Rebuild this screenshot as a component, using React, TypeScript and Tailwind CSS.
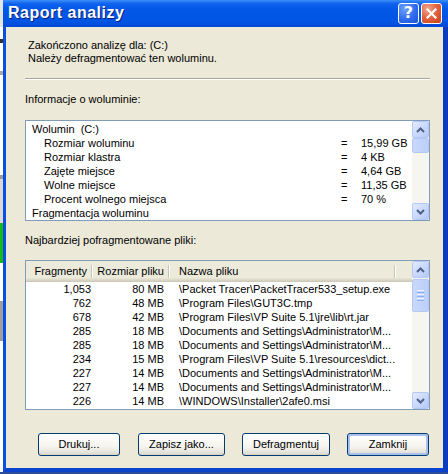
import React from 'react';

const volumeRows = [
  { label: 'Wolumin  (C:)', indent: false, value: '' },
  { label: 'Rozmiar woluminu', indent: true, value: '15,99 GB' },
  { label: 'Rozmiar klastra', indent: true, value: '4 KB' },
  { label: 'Zajęte miejsce', indent: true, value: '4,64 GB' },
  { label: 'Wolne miejsce', indent: true, value: '11,35 GB' },
  { label: 'Procent wolnego miejsca', indent: true, value: '70 %' },
  { label: 'Fragmentacja woluminu', indent: false, value: '' },
];

const files = [
  ['1,053', '80 MB', '\\Packet Tracer\\PacketTracer533_setup.exe'],
  ['762', '48 MB', '\\Program Files\\GUT3C.tmp'],
  ['678', '42 MB', '\\Program Files\\VP Suite 5.1\\jre\\lib\\rt.jar'],
  ['285', '18 MB', '\\Documents and Settings\\Administrator\\M...'],
  ['285', '18 MB', '\\Documents and Settings\\Administrator\\M...'],
  ['234', '15 MB', '\\Program Files\\VP Suite 5.1\\resources\\dict...'],
  ['227', '14 MB', '\\Documents and Settings\\Administrator\\M...'],
  ['227', '14 MB', '\\Documents and Settings\\Administrator\\M...'],
  ['226', '14 MB', '\\WINDOWS\\Installer\\2afe0.msi'],
];

function Arrow({ up }: { up: boolean }) {
  return (
    <svg width="9" height="6" viewBox="0 0 9 6">
      <path
        d={up ? 'M1 5 L4.5 1.5 L8 5' : 'M1 1 L4.5 4.5 L8 1'}
        fill="none"
        stroke="#4D6185"
        strokeWidth="2"
      />
    </svg>
  );
}

function ScrollButton({ up }: { up: boolean }) {
  return (
    <div className="h-[17px] w-[17px] flex items-center justify-center rounded-[2px] border border-[#B5C8F3] bg-[linear-gradient(135deg,#E2EBFE_0%,#C6D6FC_60%,#B4C8F6_100%)]">
      <Arrow up={up} />
    </div>
  );
}

function Scrollbar({ thumbTop, thumbHeight, grip }: { thumbTop: number; thumbHeight: number; grip?: boolean }) {
  return (
    <div className="w-[17px] flex flex-col bg-[#F6F5EF]">
      <ScrollButton up />
      <div className="flex-1 flex flex-col">
        <div
          className="rounded-[2px] border border-[#B5C8F3] bg-[linear-gradient(90deg,#C9D8FC_0%,#BCCFFA_100%)] flex flex-col items-center justify-center gap-[1px]"
          style={{ marginTop: thumbTop, height: thumbHeight }}
        >
          {grip && (
            <>
              <div className="w-[7px] h-[1px] bg-[#EEF4FE]" />
              <div className="w-[7px] h-[1px] bg-[#8CB0F8]" />
              <div className="w-[7px] h-[1px] bg-[#EEF4FE]" />
              <div className="w-[7px] h-[1px] bg-[#8CB0F8]" />
              <div className="w-[7px] h-[1px] bg-[#EEF4FE]" />
              <div className="w-[7px] h-[1px] bg-[#8CB0F8]" />
            </>
          )}
        </div>
      </div>
      <ScrollButton up={false} />
    </div>
  );
}

function HeaderCell({ children, className }: { children?: React.ReactNode; className: string }) {
  return (
    <div className={`relative h-full flex items-center ${className}`}>
      {children}
      <div className="absolute right-0 top-[4px] bottom-[4px] w-[2px] flex">
        <div className="w-[1px] bg-[#C7C5B2]" />
        <div className="w-[1px] bg-white" />
      </div>
    </div>
  );
}

function XpButton({ label, width, primary }: { label: string; width: string; primary?: boolean }) {
  return (
    <button
      className={`${width} h-[23px] rounded-[3px] border border-[#003C74] bg-[linear-gradient(180deg,#FFFFFF_0%,#F5F4EF_60%,#E3E1D7_90%,#D6D0C5_100%)] ${
        primary ? 'shadow-[inset_0_0_0_2px_#A8C1EE]' : ''
      }`}
    >
      {label}
    </button>
  );
}

export default function App() {
  return (
    <div className="w-[448px] h-[474px] flex flex-col bg-[#2A4C9A] overflow-hidden font-['Liberation_Sans',Arial,sans-serif] text-[11px] leading-[13px] text-black">
      <div className="flex h-[472px]">
        {/* desktop behind the dialog */}
        <div className="w-[3px] flex flex-col">
          <div className="h-[27px] bg-[#E4E4E4]" />
          <div className="h-[12px] bg-white" />
          <div className="h-[4px] bg-[#333]" />
          <div className="h-[28px] bg-white" />
          <div className="h-[4px] bg-[#A8A8A8]" />
          <div className="h-[100px] bg-white" />
          <div className="h-[4px] bg-[#9A9A9A]" />
          <div className="h-[44px] bg-[#D8D8D8]" />
          <div className="h-[40px] bg-[#18B818]" />
          <div className="h-[38px] bg-white" />
          <div className="h-[40px] bg-[#9E9E9E]" />
          <div className="flex-1 bg-white" />
        </div>

        {/* dialog window */}
        <div className="w-[445px] flex flex-col">
          <div className="h-[27px] flex items-center pl-[5px] pr-[6px] bg-[linear-gradient(180deg,#3D8EFA_0%,#0E62EE_14%,#0258E6_35%,#0054E3_80%,#0049D6_100%)]">
            <span className="font-['Liberation_Sans',Arial,sans-serif] font-bold text-[16px] leading-[18px] tracking-[0.5px] text-white [text-shadow:1px_1px_0_#0A1E78] pb-[1px]">
              Raport analizy
            </span>
            <div className="flex-1" />
            <div className="flex gap-[2px] mb-[1px]">
              <div className="w-[21px] h-[21px] rounded-[3px] border border-white bg-[radial-gradient(circle_at_30%_25%,#6FA0FF_0%,#2E6BEE_55%,#1F54D4_100%)] flex items-center justify-center">
                <span className="text-white font-bold text-[16px] leading-none font-['DejaVu_Sans',sans-serif]">?</span>
              </div>
              <div className="w-[21px] h-[21px] rounded-[3px] border border-white bg-[radial-gradient(circle_at_30%_25%,#F2A48A_0%,#E2603A_50%,#C8401E_100%)] flex items-center justify-center">
                <svg width="11" height="11" viewBox="0 0 11 11">
                  <path d="M1.5 1.5 L9.5 9.5 M9.5 1.5 L1.5 9.5" stroke="white" strokeWidth="2.2" strokeLinecap="square" />
                </svg>
              </div>
            </div>
          </div>

          <div className="flex-1 flex flex-col bg-[#ECE9D8] border-l-[3px] border-r-[5px] border-b-[4px] border-l-[#0A4FDF] border-r-[#0B3BBF] border-b-[#0A43CC] pl-[19px] pr-[13px] pt-[12px]">
            <div className="pl-[3px]">
              <div>Zakończono analizę dla: (C:)</div>
              <div>Należy defragmentować ten woluminu.</div>
            </div>

            <div className="mt-[13px] h-[2px] flex flex-col">
              <div className="h-[1px] bg-[#ACA899]" />
              <div className="h-[1px] bg-white" />
            </div>

            <div className="mt-[13px]">Informacje o woluminie:</div>

            {/* volume info list */}
            <div className="mt-[14px] h-[101px] flex border border-[#7F9DB9] bg-white">
              <div className="flex-1 pt-[1px] overflow-hidden">
                {volumeRows.map((r, i) => (
                  <div key={i} className="h-[14px] flex items-center leading-[14px] whitespace-pre">
                    <div className={`w-[315px] ${r.indent ? 'pl-[18px]' : 'pl-[6px]'}`}>{r.label}</div>
                    {r.value && (
                      <>
                        <div className="w-[20px]">=</div>
                        <div>{r.value}</div>
                      </>
                    )}
                  </div>
                ))}
              </div>
              <Scrollbar thumbTop={0} thumbHeight={15} />
            </div>

            <div className="mt-[13px]">Najbardziej pofragmentowane pliki:</div>

            {/* fragmented files list */}
            <div className="mt-[13px] h-[150px] flex border border-[#7F9DB9] bg-white">
              <div className="flex-1 flex flex-col overflow-hidden">
                <div className="h-[21px] flex bg-[linear-gradient(180deg,#EBEADB_0%,#EBEADB_80%,#E2DECD_86%,#D6D2C2_93%,#CBC7B8_100%)]">
                  <HeaderCell className="w-[67px] justify-end pr-[6px]">Fragmenty</HeaderCell>
                  <HeaderCell className="w-[77px] justify-end pr-[6px]">Rozmiar pliku</HeaderCell>
                  <HeaderCell className="w-[226px] pl-[9px]">Nazwa pliku</HeaderCell>
                  <div className="flex-1" />
                </div>
                {files.map((f, i) => (
                  <div key={i} className="h-[14px] flex leading-[14px] whitespace-nowrap">
                    <div className="w-[67px] text-right pr-[2px]">{f[0]}</div>
                    <div className="w-[77px] text-right pr-[6px]">{f[1]}</div>
                    <div className="flex-1 pl-[9px] overflow-hidden">{f[2]}</div>
                  </div>
                ))}
              </div>
              <Scrollbar thumbTop={1} thumbHeight={33} grip />
            </div>

            <div className="mt-[23px] flex pl-[13px]">
              <XpButton label="Drukuj..." width="w-[82px]" />
              <div className="w-[18px]" />
              <XpButton label="Zapisz jako..." width="w-[87px]" />
              <div className="w-[17px]" />
              <XpButton label="Defragmentuj" width="w-[88px]" />
              <div className="w-[17px]" />
              <XpButton label="Zamknij" width="w-[82px]" primary />
            </div>
          </div>
        </div>
      </div>
    </div>
  );
}
